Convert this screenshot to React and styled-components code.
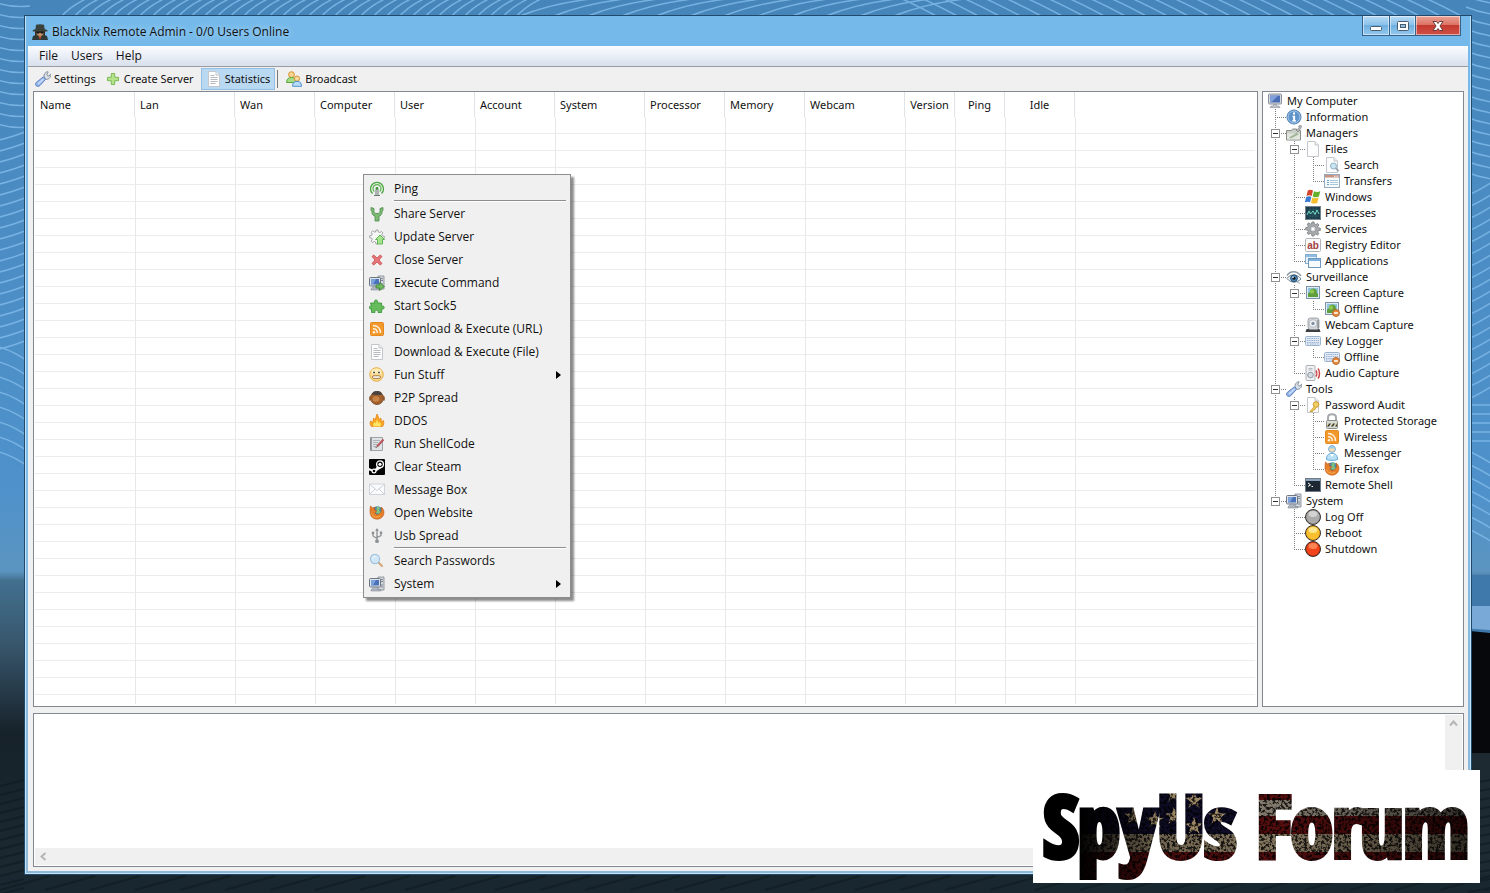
import React, { Fragment, useState } from 'react';

import styled, { createGlobalStyle, css } from 'styled-components';

const columns = [
  { name: 'Name', width: 100 },
  { name: 'Lan', width: 100 },
  { name: 'Wan', width: 80 },
  { name: 'Computer', width: 80 },
  { name: 'User', width: 80 },
  { name: 'Account', width: 80 },
  { name: 'System', width: 90 },
  { name: 'Processor', width: 80 },
  { name: 'Memory', width: 80 },
  { name: 'Webcam', width: 100 },
  { name: 'Version', width: 50, center: true },
  { name: 'Ping', width: 50, center: true },
  { name: 'Idle', width: 70, center: true },
];

const menuGroups = [
  [{ label: 'Ping', icon: 'antenna' }],
  [
    { label: 'Share Server', icon: 'fork' },
    { label: 'Update Server', icon: 'update' },
    { label: 'Close Server', icon: 'cross' },
    { label: 'Execute Command', icon: 'execute' },
    { label: 'Start Sock5', icon: 'puzzle' },
    { label: 'Download & Execute (URL)', icon: 'rss' },
    { label: 'Download & Execute (File)', icon: 'document' },
    { label: 'Fun Stuff', icon: 'smiley', more: true },
    { label: 'P2P Spread', icon: 'p2p' },
    { label: 'DDOS', icon: 'flame' },
    { label: 'Run ShellCode', icon: 'script' },
    { label: 'Clear Steam', icon: 'steam' },
    { label: 'Message Box', icon: 'mail' },
    { label: 'Open Website', icon: 'firefox' },
    { label: 'Usb Spread', icon: 'usb' },
  ],
  [
    { label: 'Search Passwords', icon: 'magnifier' },
    { label: 'System', icon: 'system', more: true },
  ],
];

const tree = {
  label: 'My Computer',
  icon: 'monitor',
  children: [
    { label: 'Information', icon: 'info' },
    {
      label: 'Managers',
      icon: 'managers',
      children: [
        {
          label: 'Files',
          icon: 'page',
          children: [
            { label: 'Search', icon: 'pageSearch' },
            { label: 'Transfers', icon: 'transfers' },
          ],
        },
        { label: 'Windows', icon: 'windows' },
        { label: 'Processes', icon: 'processes' },
        { label: 'Services', icon: 'gear' },
        { label: 'Registry Editor', icon: 'registry' },
        { label: 'Applications', icon: 'applications' },
      ],
    },
    {
      label: 'Surveillance',
      icon: 'eye',
      children: [
        {
          label: 'Screen Capture',
          icon: 'screen',
          children: [{ label: 'Offline', icon: 'screenOff' }],
        },
        { label: 'Webcam Capture', icon: 'webcam' },
        {
          label: 'Key Logger',
          icon: 'keyboard',
          children: [{ label: 'Offline', icon: 'keyboardOff' }],
        },
        { label: 'Audio Capture', icon: 'audio' },
      ],
    },
    {
      label: 'Tools',
      icon: 'wrench',
      children: [
        {
          label: 'Password Audit',
          icon: 'pageKey',
          children: [
            { label: 'Protected Storage', icon: 'lock' },
            { label: 'Wireless', icon: 'rss' },
            { label: 'Messenger', icon: 'messenger' },
            { label: 'Firefox', icon: 'firefox' },
          ],
        },
        { label: 'Remote Shell', icon: 'shell' },
      ],
    },
    {
      label: 'System',
      icon: 'system',
      children: [
        { label: 'Log Off', icon: 'ballGrey' },
        { label: 'Reboot', icon: 'ballYellow' },
        { label: 'Shutdown', icon: 'ballRed' },
      ],
    },
  ],
};

const gearPath =
  'M7 1h2l.4 2 1.3.6 1.8-1.1 1.3 1.4-1.1 1.7.6 1.3 2 .4v2l-2 .4-.6 1.3 1.1 1.8-1.4 1.3-1.7-1.1-1.3.6L9 15H7l-.4-2-1.3-.6-1.8 1.1-1.3-1.4 1.1-1.7-.6-1.3-2-.4v-2l2-.4.6-1.3-1.1-1.8 1.4-1.3 1.7 1.1L6.6 3z';

const ball = (light, mid, dark) => (
  <Fragment>
    <circle cx="8" cy="8" r="7.5" fill={dark} stroke="#3a3430" />
    <circle cx="8" cy="8" r="6.5" fill={mid} />
    <ellipse cx="8" cy="5" rx="4.5" ry="3" fill={light} opacity="0.8" />
  </Fragment>
);

const page = (
  <Fragment>
    <path d="M2.5.5H10l3.500 3.500v11.500h-11z" fill="#fdfdfd" stroke="#c3c6cb" />
    <path d="M10 .5V4h3.500" fill="#eceef0" stroke="#c3c6cb" />
  </Fragment>
);

const noEntry = (
  <Fragment>
    <circle cx="12" cy="12" r="3.5" fill="#e58a3c" stroke="#b45a1c" strokeWidth="0.8" />
    <path d="M10 12h4" stroke="#fff" strokeWidth="1.5" />
  </Fragment>
);

const screen = (
  <Fragment>
    <rect x="1.5" y="1.5" width="13" height="12" fill="#dfeaf3" stroke="#7d93a8" />
    <rect x="3" y="3" width="10" height="9" fill="#8fc3e0" />
    <path d="M3 12V8.500l2-1.500 1-3 3-.6 2.500 1.600.5 3 1 1v3z" fill="#5f9e3c" />
    <circle cx="7" cy="6.5" r="2.2" fill="#8cc653" />
  </Fragment>
);

const keyboard = (
  <Fragment>
    <rect x="0.5" y="3.5" width="15" height="9" rx="1" fill="#e3ecf6" stroke="#9db4cf" />
    <path
      d="M2 5.500h12M2 7.500h12M2 9.500h12M2 11h2M5 11h6M12 11h2"
      stroke="#9bb2d0"
      strokeDasharray="1.5 0.7"
    />
  </Fragment>
);

const system = (
  <Fragment>
    <path d="M9 1h6v13H9z" fill="#d5d9df" stroke="#7d858f" strokeWidth="0.8" />
    <path d="M10.500 3.500H14M10.500 5.500H14M13 8v4" stroke="#7f8791" />
    <rect x="0.5" y="2.5" width="11" height="8.5" rx="1" fill="#dfe3e8" stroke="#6d7784" />
    <rect x="2" y="4" width="8" height="5.5" fill="#4a72b8" />
    <path d="M2 4h5L4 9.500H2z" fill="#7da1da" />
    <path d="M4.500 11h3L9 13.500h3V15H2v-1z" fill="#aeb4bd" stroke="#7b838e" strokeWidth="0.5" />
  </Fragment>
);

const drawings = {
  spy: (
    <Fragment>
      <path d="M3 7h10v5H3z" fill="#3b2f28" />
      <path d="M4.500 6h7v4.500L9.500 13h-3l-2-2.500z" fill="#c08f62" />
      <path d="M4 .8l4-.6 4 .6.6 4.200 3 1.200-.4 1.300H1l-.4-1.300L3.500 5z" fill="#39413a" />
      <path d="M4.300 7.200h7.400v2.200H9L8 8.300 7 9.400H4.300z" fill="#15181a" />
      <path d="M0 16l1-4 4-1.500 3 3 3-3 4 1.500 1 4z" fill="#2e3a38" />
      <path d="M6.500 12.500h3L8 16z" fill="#b5462f" />
    </Fragment>
  ),
  wrench: (
    <Fragment>
      <path
        d="M9.500 7c-1.200-2.500 0-5.500 3-6.400l.7.3-1.300 2.400.8 1.500 1.600.1 1.200-2 .5.6C15.800 6.700 13 9 10.600 8.200z"
        fill="#d9dfe6"
        stroke="#7c8794"
        strokeWidth="0.9"
      />
      <path
        d="M8.400 5.800l2.300 2.400-5.600 6.200c-1.200 1.300-3 1.300-3.900.4-1-.9-.9-2.600.4-3.700z"
        fill="#91b4e8"
        stroke="#5f80bd"
        strokeWidth="0.9"
      />
      <path d="M8.500 8L3 13" stroke="#d3e3fb" strokeWidth="1.3" />
    </Fragment>
  ),
  plus: (
    <path
      d="M6.300 2.500h3.400v3.800h3.800v3.400H9.700v3.800H6.300V9.700H2.500V6.300h3.800z"
      fill="#b4e38c"
      stroke="#7cba55"
    />
  ),
  document: (
    <Fragment>
      {page}
      <path d="M4.500 4.500h4M4.500 6.500h7M4.500 8.500h7M4.500 10.500h7M4.500 12.500h5" stroke="#b6b9be" />
    </Fragment>
  ),
  users: (
    <Fragment>
      <circle cx="5.5" cy="3.6" r="2.9" fill="#f6d492" stroke="#d7922c" />
      <path d="M.6 11.500c0-3.500 1.800-5 4.900-5s4.900 1.500 4.900 5z" fill="#a6dc85" stroke="#5ca53c" />
      <circle cx="11" cy="7.6" r="2.6" fill="#f8d9a0" stroke="#d7922c" />
      <path d="M6.600 15.300c0-3.600 1.400-4.900 4.400-4.900s4.500 1.300 4.500 4.900z" fill="#b8dcf7" stroke="#4f94cf" />
    </Fragment>
  ),
  monitor: (
    <Fragment>
      <rect x="1.5" y="1" width="13" height="10" rx="1" fill="#d6d9de" stroke="#8b919b" />
      <rect x="3" y="2.5" width="10" height="7" fill="#4a6db6" />
      <path d="M3 2.500h8L4.500 9.500H3z" fill="#7f9fd8" />
      <path d="M6.500 11.500h3V13H12l1 1.500H3L4 13h2.500z" fill="#c3c8ce" stroke="#8b919b" strokeWidth="0.6" />
    </Fragment>
  ),
  info: (
    <Fragment>
      <circle cx="8" cy="8" r="7" fill="#5f95cb" stroke="#477cb4" />
      <circle cx="8" cy="8" r="6" fill="none" stroke="#b8d4ec" strokeWidth="0.8" />
      <path d="M7 3.500h2v2H7zM6.500 6.800h2.600v4.400h.9v1.300H6.200v-1.300h.9V8.100h-.6z" fill="#fff" />
    </Fragment>
  ),
  managers: (
    <Fragment>
      <path d="M.5 5.500h5l1-1.500h4v1.500h4V15H.5z" fill="#c9cec6" stroke="#888d86" />
      <path d="M1 8.500h13v6H1z" fill="#e2e6df" />
      <path d="M3 12.500l8-5 1.500 2-7.500 4z" fill="#a4b59a" />
      <path d="M10.500 5.500L13 2.800 12.700 1l2-1 .8 1.500-.8 2L12 7z" fill="#b7b9bd" stroke="#7f8287" strokeWidth="0.7" />
    </Fragment>
  ),
  page,
  pageSearch: (
    <Fragment>
      {page}
      <circle cx="9.5" cy="9" r="3" fill="#cbe6f2" stroke="#8fb2c8" />
      <path d="M11.600 11.200l3 3" stroke="#9da7b2" strokeWidth="1.8" />
    </Fragment>
  ),
  transfers: (
    <Fragment>
      <rect x="0.5" y="1.5" width="15" height="13" fill="#f8fbfd" stroke="#95abc0" />
      <path d="M1 2h14v2.500H1z" fill="#c9927f" />
      <path d="M10 3.200h4" stroke="#fff" strokeDasharray="1 0.5" />
      <path d="M3 7.500h2M3 9.500h2M3 11.500h2" stroke="#6ba3c6" />
      <path d="M6 7.500h8M6 9.500h8M6 11.500h8" stroke="#a9c8dc" />
    </Fragment>
  ),
  windows: (
    <Fragment>
      <path d="M2.800 1.500C4.500.3 6.500.4 8 1.600L6.700 7C5.300 6 3.200 6 1.500 6.900z" fill="#d6452b" />
      <path d="M9 2.200c2 1 4 1 6.300 0l-1.400 5.400c-2.200 1-4.200.9-6.200-.2z" fill="#67b02e" />
      <path d="M1.200 8c1.800-.9 3.700-1 5.200-.1L5 13.300c-1.500-.9-3.400-.8-5.200 0z" fill="#3d7bd2" />
      <path d="M7.400 8.400c2.100 1.100 4 1.100 6.200.2l-1.400 5.300c-2.100 1-4.200.9-6.200-.2z" fill="#f2bf2a" />
    </Fragment>
  ),
  processes: (
    <Fragment>
      <rect x="0.5" y="1.5" width="15" height="13" fill="#1f3b4a" stroke="#74838c" />
      <path d="M2 5h12M2 8h12M2 11h12M5 2v12M8 2v12M11 2v12" stroke="#2e6670" strokeWidth="0.6" />
      <path d="M2 10l2-4 1.500 3L8 6l2 3.500L12 5l2 4" fill="none" stroke="#6fdcc0" />
    </Fragment>
  ),
  gear: (
    <Fragment>
      <path d={gearPath} fill="#a9acae" stroke="#85888b" />
      <circle cx="8" cy="8" r="3" fill="#d4d6d8" stroke="#85888b" strokeWidth="0.7" />
      <circle cx="8" cy="8" r="1.2" fill="#fff" />
    </Fragment>
  ),
  registry: (
    <Fragment>
      <rect x="0.5" y="1.5" width="15" height="13" rx="1" fill="#fbfbfb" stroke="#b3b5b8" />
      <text x="8" y="12" textAnchor="middle" fontFamily="Liberation Sans, sans-serif" fontWeight="700" fontSize="10" fill="#a2403c">
        ab
      </text>
    </Fragment>
  ),
  applications: (
    <Fragment>
      <rect x="0.5" y="1.5" width="11" height="9" fill="#e8f2fb" stroke="#8aaed0" />
      <path d="M1 2h10v2H1z" fill="#8fbbe2" />
      <rect x="3.5" y="5.5" width="12" height="9" fill="#f6fafd" stroke="#6f97be" />
      <path d="M4 6h11v2H4z" fill="#7fb0dd" />
    </Fragment>
  ),
  eye: (
    <Fragment>
      <path d="M1 6.500C4 1.500 11 1 15 7" fill="none" stroke="#8f9ba6" strokeWidth="1.5" />
      <path d="M1 9.500C4 5 11 4.500 15 10c-4 4-10 4.500-14-.5z" fill="#edf3f7" stroke="#6c7f8e" />
      <circle cx="8" cy="9.3" r="3.4" fill="#4e86b4" stroke="#2b4f70" />
      <circle cx="8" cy="9.3" r="1.5" fill="#101820" />
      <circle cx="7" cy="8.2" r="0.8" fill="#fff" />
      <path d="M11 13l3 1.500" stroke="#a0abb5" />
    </Fragment>
  ),
  screen,
  screenOff: (
    <Fragment>
      {screen}
      {noEntry}
    </Fragment>
  ),
  webcam: (
    <Fragment>
      <path d="M1.500 12h13l1 3H.5z" fill="#3c3f42" />
      <rect x="3" y="1" width="11" height="11.5" rx="2.5" fill="#d4d8dc" stroke="#8d9297" strokeWidth="0.8" />
      <circle cx="8" cy="6.5" r="3.8" fill="#f2f4f6" stroke="#a5abb1" strokeWidth="0.7" />
      <circle cx="8" cy="6.5" r="1.7" fill="#7e90a2" />
      <path d="M13 3v8" stroke="#6f757b" />
    </Fragment>
  ),
  keyboard,
  keyboardOff: (
    <Fragment>
      {keyboard}
      {noEntry}
    </Fragment>
  ),
  audio: (
    <Fragment>
      <rect x="1" y="0.5" width="9" height="15" rx="1" fill="#f0f1f3" stroke="#aeb1b6" />
      <circle cx="5.5" cy="10" r="2.8" fill="#d4dae2" stroke="#9098a3" />
      <path d="M3.500 3.500h4M3.500 5h4" stroke="#b7bbc1" />
      <path d="M11 5.500c1 1.500 1 4.500 0 6M13 3.500c2 2.500 2 7.500 0 10" fill="none" stroke="#cf4449" strokeWidth="1.5" />
    </Fragment>
  ),
  pageKey: (
    <Fragment>
      {page}
      <circle cx="11" cy="7.5" r="2.8" fill="#f3cf62" stroke="#c99a30" />
      <path d="M9.500 9.500l-4.500 5h2.500L8 13h1.500l2-3" fill="#f3cf62" stroke="#c99a30" strokeWidth="0.9" />
    </Fragment>
  ),
  lock: (
    <Fragment>
      <path d="M4 8V4.500c0-4.500 8-4.500 8 0V8" fill="none" stroke="#a6a9ad" strokeWidth="2" />
      <rect x="2.5" y="7.5" width="11" height="8" rx="1" fill="#d9dcd2" stroke="#8a8d86" />
      <path d="M3 13.500l2-3h2l-2 3zM7 13.500l2-3h2l-2 3zM11 13.500l2-3v3z" fill="#333" />
      <path d="M3 13l2-2.500M7 13l2-2.500M11 13l2-2.500" stroke="#d4b93a" strokeWidth="0.6" />
    </Fragment>
  ),
  rss: (
    <Fragment>
      <rect x="1.5" y="1.5" width="13" height="13" rx="1" fill="#f2982c" stroke="#e5891c" />
      <path d="M4 4.500c4.500 0 7.500 3 7.500 7.500M4 7.800c2.700 0 4.300 1.700 4.300 4.200" fill="none" stroke="#fff3df" strokeWidth="1.5" />
      <circle cx="5" cy="11.2" r="1.2" fill="#fff3df" />
    </Fragment>
  ),
  messenger: (
    <Fragment>
      <circle cx="8" cy="4" r="3.4" fill="#f5dcb5" stroke="#6ba9d4" />
      <path d="M4.500 3.500C5 0 11 0 11.500 3.500 9.500 2.500 7 4 4.500 3.500z" fill="#9acbea" />
      <path d="M2.500 14.500c0-4.500 2-6 5.500-6s5.500 1.500 5.500 6c-3 1.200-8 1.200-11 0z" fill="#b9e0f5" stroke="#67a8d3" />
      <path d="M6 9l2 3 2-3z" fill="#fff" />
    </Fragment>
  ),
  firefox: (
    <Fragment>
      <circle cx="8.5" cy="7" r="5.8" fill="#4f87a8" />
      <path d="M8 1.500l3 1-1 3 2 1.500-2 2-3-1z" fill="#7ec27f" />
      <path
        d="M1.500 1l2 1.800 2.500-.5-1 2.500 3 1-2 1.800c.5 2.300 3.200 2.300 4.700 1C12.500 7.400 13 4.500 12 2c3.500 2 4 7.300 1 10.200s-8 2.400-10.500-.5C.6 9.300.8 4.500 1.500 1z"
        fill="#e6802a"
        stroke="#b9521a"
        strokeWidth="0.6"
      />
      <path d="M2.500 8.500c1 3.300 4.800 4.700 8.500 2.800" fill="none" stroke="#f6b04a" />
    </Fragment>
  ),
  shell: (
    <Fragment>
      <rect x="0.5" y="1.5" width="15" height="13" fill="#1e2833" stroke="#6e7b88" />
      <path d="M1 2h14v2H1z" fill="#8ba2b9" />
      <path d="M3 6l2.500 1.800L3 9.500M6.500 9.500H8" fill="none" stroke="#fff" />
    </Fragment>
  ),
  system,
  ballGrey: ball('#dcdcdc', '#ababab', '#8c8c8c'),
  ballYellow: ball('#fff0a4', '#f8c02e', '#e09a10'),
  ballRed: ball('#ff9460', '#f1441a', '#c42a0c'),
  antenna: (
    <Fragment>
      <path d="M3.500 12.500a6.500 6.500 0 1 1 9 0" fill="none" stroke="#48a63c" strokeWidth="1.3" />
      <path d="M5.300 10.500a4 4 0 1 1 5.400 0" fill="none" stroke="#5fb653" strokeWidth="1.3" />
      <circle cx="8" cy="7.5" r="1.4" fill="#3b8f33" />
      <path d="M7 8.500v6M9 8.500v6M5 14.500h6" stroke="#6b7a70" />
    </Fragment>
  ),
  fork: (
    <path
      d="M2 1.500l3 1v3c0 1.300 1 2 3 2s3-.7 3-2v-3l3-1v2.800l-.8 1.200C13 8.500 11.800 9.800 10 10.200V15H6v-4.800C4.200 9.800 3 8.500 2.800 5.500L2 4.300z"
      fill="#7cba76"
      stroke="#4b8a4c"
      strokeWidth="0.8"
    />
  ),
  update: (
    <Fragment>
      <path d={gearPath} fill="#f7f7f7" stroke="#999c9f" strokeWidth="0.9" />
      <path d="M11 6l4.500 4.500h-2V15h-5v-4.500h-2z" fill="#a4e48f" stroke="#4da83f" strokeWidth="0.8" />
    </Fragment>
  ),
  cross: (
    <path
      d="M3 4.500L4.800 3 8 6l3.200-3L13 4.500 10 8l3 3.500-1.800 1.500L8 10l-3.200 3L3 11.500 6 8z"
      fill="#e8777c"
      stroke="#c5474e"
      strokeWidth="0.8"
    />
  ),
  execute: (
    <Fragment>
      {system}
      <path d="M7 10h3.500V7.500l5 4-5 4V13H7z" fill="#6fb95c" stroke="#3c8433" strokeWidth="0.8" />
    </Fragment>
  ),
  puzzle: (
    <path
      d="M1.500 5h4.200C4 1 9.800 1 8.600 5h4v3.200c3.500-1.200 3.500 3.800 0 2.800v3.500H9c.8-3-3.800-3-3 0H2.500V11c-3 .8-3-3.800 0-2.800L1.500 5z"
      fill="#66bb5c"
      stroke="#3f9a3f"
      strokeWidth="0.9"
    />
  ),
  smiley: (
    <Fragment>
      <circle cx="7.5" cy="7.5" r="6.8" fill="#fbd98a" stroke="#dfa02d" strokeWidth="0.8" />
      <ellipse cx="7.5" cy="4" rx="5" ry="2.5" fill="#fff0bd" opacity="0.8" />
      <circle cx="4.7" cy="5.5" r="1.6" fill="#fff" />
      <circle cx="10.3" cy="5.5" r="1.6" fill="#fff" />
      <circle cx="5" cy="5.5" r="0.9" fill="#3c2b10" />
      <circle cx="10" cy="5.5" r="0.9" fill="#3c2b10" />
      <rect x="3.5" y="8.8" width="8" height="2.6" rx="1.3" fill="#fff" stroke="#8c5a20" strokeWidth="0.8" />
    </Fragment>
  ),
  p2p: (
    <Fragment>
      <circle cx="8" cy="8" r="6.5" fill="#a2602c" stroke="#6d3b17" strokeWidth="0.8" />
      <ellipse cx="7" cy="9" rx="3.5" ry="2.8" fill="#c98347" />
      <path d="M3 3.500C4.500.2 11.500.2 13 3.500L12 5H4z" fill="#4b443f" />
      <path d="M1 6.500v4M15 6.500v4" stroke="#8a5126" strokeWidth="1.5" />
    </Fragment>
  ),
  flame: (
    <Fragment>
      <path
        d="M2.500 13.500c-2-2-1.500-4-.8-5.500L4 9.500 4.500 5l1.800 1.800L8 1l2.300 5.500L12 5l.3 4 2.200-1.500c.6 2 .4 4.300-1 6z"
        fill="#f7a823"
        stroke="#e88415"
        strokeWidth="0.8"
      />
      <path d="M4.500 13.500c-1-2 .3-3.500 1.200-4.500l1 1.500L8 6.500l1.600 4L10.800 9c1.200 1.500 1.300 3 .6 4.500z" fill="#ffe563" />
    </Fragment>
  ),
  script: (
    <Fragment>
      <path d="M1.500 1.500h12v13h-12z" fill="#dfe2e4" stroke="#a1a5a9" />
      <path d="M4 4.500h7M4 6.500h5M4 8.500h4M4 10.500h3" stroke="#aeb3b8" />
      <path d="M2 1.500v13" stroke="#80858a" strokeWidth="1.5" />
      <path d="M14.500 3.500L8 10.500" stroke="#b7545b" strokeWidth="2" />
      <path d="M8 10.500l-1.300 1.500" stroke="#444" />
    </Fragment>
  ),
  steam: (
    <Fragment>
      <rect width="16" height="16" rx="1" fill="#050505" />
      <path d="M0 9l5 2.200L8.500 7 13 8.500l-6 4L5.500 14 2 12l-2-.5z" fill="#fff" />
      <circle cx="11" cy="5.3" r="3.4" fill="#050505" stroke="#fff" strokeWidth="1.3" />
      <circle cx="11" cy="5.3" r="1.6" fill="#fff" />
      <circle cx="5" cy="12" r="2.5" fill="#fff" />
      <circle cx="5" cy="12" r="1.3" fill="#050505" />
    </Fragment>
  ),
  mail: (
    <Fragment>
      <rect x="0.5" y="2" width="15" height="10.5" fill="#fafbfc" stroke="#cfd3da" />
      <path d="M1 2.500l7 6 7-6M1 12l5-5M15 12l-5-5" fill="none" stroke="#bfc5d0" strokeWidth="0.8" />
    </Fragment>
  ),
  usb: (
    <Fragment>
      <path d="M8 2v11M8 10.500L4 8V5.500M8 9.500l4-2V5" fill="none" stroke="#8e9194" strokeWidth="1.3" />
      <path d="M8 0l1.800 3H6.200z" fill="#8e9194" />
      <circle cx="8" cy="13.2" r="1.9" fill="#8e9194" />
      <circle cx="4" cy="5" r="1.4" fill="#8e9194" />
      <path d="M10.800 3.500h2.400v2.400h-2.400z" fill="#8e9194" />
    </Fragment>
  ),
  magnifier: (
    <Fragment>
      <circle cx="6" cy="6" r="4.6" fill="#cfe8f8" stroke="#a3c3dd" strokeWidth="1.2" />
      <path d="M3.500 5.500C4 4 5 3.500 6.500 3.500" fill="none" stroke="#fff" />
      <path d="M9.500 9.500l1.200 1.200" stroke="#8fa0b0" strokeWidth="1.5" />
      <path d="M10.500 10.500l2.500 2.500" stroke="#d3a878" strokeWidth="2.2" strokeLinecap="round" />
    </Fragment>
  ),
};

const Icon = ({ name }) => (
  <IconBox viewBox="0 0 16 16" aria-hidden="true">
    {drawings[name]}
  </IconBox>
);

const range = (from, to, step) => {
  const out = [];
  for (let i = from; i < to; i += step) out.push(i);
  return out;
};

const Wallpaper = () => (
  <Backdrop viewBox="0 0 1490 893" preserveAspectRatio="none" aria-hidden="true">
    <defs>
      <linearGradient id="sky" x1="0" y1="0" x2="0" y2="1">
        <stop offset="0" stopColor="#4585b9" />
        <stop offset="0.2" stopColor="#4a8bc2" />
        <stop offset="0.55" stopColor="#4f92cb" />
        <stop offset="0.64" stopColor="#5b94c0" />
        <stop offset="0.65" stopColor="#42708f" />
        <stop offset="0.72" stopColor="#38576d" />
        <stop offset="0.82" stopColor="#17222a" />
        <stop offset="1" stopColor="#1b2a32" />
      </linearGradient>
    </defs>
    <rect width="1490" height="893" fill="url(#sky)" />
    <g fill="none" stroke="#7fb9e8" strokeWidth="1.5" opacity="0.85">
      {range(2, 130, 11).map(y => (
        <path key={y} d={`M-5 ${y}q15 6 35 4`} />
      ))}
      {range(136, 350, 11).map(y => (
        <path key={y} d={`M-5 ${y + 5}q15 -3 35 -11`} />
      ))}
      {range(346, 460, 15).map(y => (
        <path key={y} d={`M-5 ${y}q18 4 35 17`} />
      ))}
      {range(60, 520, 13).map(x => (
        <path key={x} d={`M${x} 18q10 -12 28 -20`} />
      ))}
      {range(520, 900, 34).map(x => (
        <path key={x} d={`M${x} 16q30 -12 70 -17`} />
      ))}
      {range(900, 1440, 21).map(x => (
        <path key={x} d={`M${x} -2q18 8 40 20`} />
      ))}
      {range(-4, 180, 11).map(y => (
        <path key={y} d={`M1466 ${y}q12 5 26 7`} />
      ))}
      {range(190, 400, 12).map(y => (
        <path key={y} d={`M1466 ${y + 6}q12 -5 26 -14`} />
      ))}
      {range(405, 445, 9).map(y => (
        <path key={y} d={`M1466 ${y}h26`} />
      ))}
      {range(450, 540, 13).map(y => (
        <path key={y} d={`M1466 ${y}q12 5 26 14`} />
      ))}
    </g>
    <path d="M1460 575h30v60h-30z" fill="#3f78aa" />
    <path d="M1460 606h30v24l-30 -2z" fill="#79a9d6" />
    <path d="M1460 630l30 3v122h-30z" fill="#07080c" />
    <path d="M1460 753h30v140h-30z" fill="#1d2a31" />
    <path d="M0 874h1490v19H0z" fill="#192830" />
    <g stroke="#101a20" strokeWidth="2" opacity="0.6">
      {range(780, 893, 9).map(y => (
        <path key={y} d={`M0 ${y + 6}l24 -6M1468 ${y + 4}l22 -4`} />
      ))}
      {range(0, 1490, 45).map(x => (
        <path key={x} d={`M${x} 890l50 -14`} />
      ))}
    </g>
  </Backdrop>
);

const star = 'M0-9l2.300 6.200 6.500.2-5.200 4L5.500 7.700 0 4l-5.500 3.700 1.900-6.300-5.200-4 6.500-.2z';

const stars = [
  [141, 24],
  [161, 30],
  [141, 46],
  [122, 50],
  [161, 56],
  [184, 46],
  [100, 46],
];

const Logo = () => (
  <LogoCard viewBox="0 0 447 113" role="img" aria-label="SpyUs Forum">
    <defs>
      <filter id="grunge" x="0" y="0" width="100%" height="100%">
        <feTurbulence type="fractalNoise" baseFrequency="0.35" numOctaves="3" seed="4" />
        <feColorMatrix values="0 0 0 0 0  0 0 0 0 0  0 0 0 0 0  0 0 0 6 -2.7" />
      </filter>
      <linearGradient id="shade" x1="0" y1="0" x2="1" y2="0">
        <stop offset="0" stopColor="#000" />
        <stop offset="0.1" stopColor="#000" />
        <stop offset="0.28" stopColor="#000" stopOpacity="0.25" />
        <stop offset="0.55" stopColor="#000" stopOpacity="0.1" />
        <stop offset="1" stopColor="#000" stopOpacity="0.7" />
      </linearGradient>
      <pattern id="flag" width="447" height="113" patternUnits="userSpaceOnUse">
        <rect width="447" height="113" fill="#5d0f10" />
        <rect y="30" width="447" height="16" fill="#93897a" />
        <rect y="64" width="447" height="18" fill="#93846a" />
        <rect width="216" height="64" fill="#120f30" />
        {stars.map(([x, y]) => (
          <path key={`${x}-${y}`} d={star} fill="#c5ab80" transform={`translate(${x} ${y})`} />
        ))}
        <rect width="447" height="113" filter="url(#grunge)" opacity="0.8" />
        <rect width="447" height="113" fill="url(#shade)" />
      </pattern>
    </defs>
    <LogoText x="223" y="87" textAnchor="middle">
      SpyUs Forum
    </LogoText>
  </LogoCard>
);

const TreeNode = ({ node, guides, last }) => {
  const [open, setOpen] = useState(true);

  const toggleHandle = () => {
    setOpen(!open);
  };

  const nested = guides.length > 0;
  // the last slot belongs to this node, the ones before it to its parents
  const parents = guides.slice(0, -1);

  return (
    <li>
      <TreeRow>
        {parents.map((line, i) => (
          <Guide key={i} $line={line} />
        ))}
        {nested && (
          <Guide $line $half={last} $branch>
            {node.children && (
              <Toggle
                type="button"
                aria-label={`Toggle ${node.label}`}
                aria-expanded={open}
                onClick={toggleHandle}
              >
                <svg viewBox="0 0 7 7" width="7" height="7">
                  <path d={open ? 'M1 3.500h5' : 'M1 3.500h5M3.500 1v5'} stroke="#333" />
                </svg>
              </Toggle>
            )}
          </Guide>
        )}
        <Icon name={node.icon} />
        <span>{node.label}</span>
      </TreeRow>
      {node.children && open && (
        <TreeList>
          {node.children.map((child, i) => {
            const isLast = i === node.children.length - 1;
            return (
              <TreeNode
                key={child.label}
                node={child}
                last={isLast}
                guides={[...guides, !isLast]}
              />
            );
          })}
        </TreeList>
      )}
    </li>
  );
};

const App = () => {
  const [statistics, setStatistics] = useState(true);

  return (
    <Desktop>
      <GlobalStyle />
      <Wallpaper />
      <Window>
        <TitleBar>
          <Icon name="spy" />
          <Title>BlackNix Remote Admin - 0/0 Users Online</Title>
          <Controls>
            <Control type="button" aria-label="Minimize">
              <svg width="14" height="12" viewBox="0 0 14 12">
                <rect x="1.5" y="6.5" width="11" height="4" rx="1" fill="#fff" stroke="#4b5d6c" />
              </svg>
            </Control>
            <Control type="button" aria-label="Maximize">
              <svg width="14" height="12" viewBox="0 0 14 12">
                <rect x="1.5" y="1.5" width="11" height="9" rx="1" fill="#fff" stroke="#4b5d6c" />
                <rect x="4.5" y="4.5" width="5" height="3" fill="#8fc0e6" stroke="#4b5d6c" />
              </svg>
            </Control>
            <Control type="button" aria-label="Close" $close>
              <svg width="14" height="12" viewBox="0 0 14 12">
                <path
                  d="M2 1.500h3.500L7 3.500l1.500-2H12L9 6l3 4.500H8.500L7 8.500l-1.500 2H2L5 6z"
                  fill="#fff"
                  stroke="#6b3a3a"
                />
              </svg>
            </Control>
          </Controls>
        </TitleBar>

        <Client>
          <MenuBar>
            <MenuButton type="button">File</MenuButton>
            <MenuButton type="button">Users</MenuButton>
            <MenuButton type="button">Help</MenuButton>
          </MenuBar>

          <Toolbar>
            <ToolButton type="button">
              <Icon name="wrench" />
              Settings
            </ToolButton>
            <ToolButton type="button">
              <Icon name="plus" />
              Create Server
            </ToolButton>
            <ToolButton
              type="button"
              className={statistics ? 'active' : ''}
              aria-pressed={statistics}
              onClick={() => setStatistics(!statistics)}
            >
              <Icon name="document" />
              Statistics
            </ToolButton>
            <Divider />
            <ToolButton type="button">
              <Icon name="users" />
              Broadcast
            </ToolButton>
          </Toolbar>

          <Main>
            <ListPane>
              <ListClip>
                <UserTable>
                  <colgroup>
                    {columns.map(col => (
                      <col key={col.name} width={col.width} />
                    ))}
                    <col />
                  </colgroup>
                  <thead>
                    <tr>
                      {columns.map(col => (
                        <HeadCell key={col.name} $center={col.center}>
                          {col.name}
                        </HeadCell>
                      ))}
                      <td />
                    </tr>
                  </thead>
                  <tbody>
                    {range(0, 60, 1).map(row => (
                      <tr key={row}>
                        {columns.map(col => (
                          <BodyCell key={col.name} />
                        ))}
                        <BodyCell />
                      </tr>
                    ))}
                  </tbody>
                </UserTable>
              </ListClip>

              <ContextMenu>
                {menuGroups.map((group, i) => (
                  <Fragment key={i}>
                    {i > 0 && <MenuLine />}
                    {group.map(item => (
                      <MenuItem type="button" key={item.label}>
                        <Icon name={item.icon} />
                        <span>{item.label}</span>
                        {item.more && (
                          <svg width="5" height="8" viewBox="0 0 5 8">
                            <path d="M0 0l5 4-5 4z" />
                          </svg>
                        )}
                      </MenuItem>
                    ))}
                  </Fragment>
                ))}
              </ContextMenu>
            </ListPane>

            <TreePane>
              <TreeList>
                <TreeNode node={tree} guides={[]} />
              </TreeList>
            </TreePane>
          </Main>

          <LogPane>
            <Log aria-label="Log" readOnly />
            <ScrollBar $vertical>
              <ScrollButton type="button" aria-label="Scroll up">
                <svg width="9" height="7" viewBox="0 0 9 7">
                  <path d="M1 5.500l3.500-4 3.500 4" />
                </svg>
              </ScrollButton>
            </ScrollBar>
            <ScrollBar>
              <ScrollButton type="button" aria-label="Scroll left">
                <svg width="7" height="9" viewBox="0 0 7 9">
                  <path d="M5.500 1l-4 3.500 4 3.500" />
                </svg>
              </ScrollButton>
            </ScrollBar>
            <ScrollBar />
          </LogPane>
        </Client>
      </Window>
      <Logo />
    </Desktop>
  );
};

const GlobalStyle = createGlobalStyle`
  * {
    box-sizing: border-box;
  }
  body {
    margin: 0;
    font-family: "Noto Sans", "Open Sans", sans-serif;
    font-size: 11px;
    line-height: 16px;
    color: #111;
  }
  button {
    font: inherit;
    color: inherit;
    background: none;
    border: none;
    padding: 0;
  }
`;

const Desktop = styled.div`
  position: relative;
  display: flex;
  min-height: 100vh;
  padding: 15px 18px 18px 24px;
`;

const Backdrop = styled.svg`
  position: absolute;
  inset: 0;
  width: 100%;
  height: 100%;
`;

const IconBox = styled.svg`
  flex: none;
  width: 16px;
  height: 16px;
`;

const Window = styled.div`
  position: relative;
  flex: 1;
  min-width: 0;
  display: flex;
  flex-direction: column;
  padding: 0 3px 3px;
  border: 1px solid #1f4a6b;
  background: linear-gradient(to bottom, #74b9ea, #7dbcea 50%, #8fb8d6);
  box-shadow: inset 1px 0 #c4e2f7, inset -1px -1px #c4e2f7;
`;

const TitleBar = styled.div`
  display: flex;
  align-items: center;
  gap: 4px;
  height: 30px;
  padding: 2px 7px 0 4px;
`;

const Title = styled.div`
  flex: 1;
  font-family: 'Open Sans', sans-serif;
  font-size: 12px;
  text-shadow: 0 0 6px #c6e4fa;
`;

const Controls = styled.div`
  display: flex;
  align-self: flex-start;
  margin-top: -2px;
  border: 1px solid #36628a;
  border-top: none;
`;

const Control = styled.button`
  display: flex;
  align-items: center;
  justify-content: center;
  width: 26px;
  height: 19px;
  background: linear-gradient(to bottom, #b9dcf6, #86bfe9 50%, #6fb0e0 50%, #93c8ee);
  box-shadow: inset 0 0 0 1px rgba(255, 255, 255, 0.5);

  & + & {
    border-left: 1px solid #36628a;
  }

  ${props =>
    props.$close &&
    css`
      width: 45px;
      background: linear-gradient(to bottom, #eaa396, #dc7465 45%, #c53a30 50%, #cf5046);
    `}
`;

const Client = styled.div`
  flex: 1;
  min-height: 0;
  display: flex;
  flex-direction: column;
  padding: 0 4px 4px 5px;
  background: #f0f0f0;
`;

const MenuBar = styled.div`
  display: flex;
  gap: 13px;
  height: 21px;
  margin: 0 -4px 0 -5px;
  padding: 0 11px;
  background: linear-gradient(to bottom, #fbfcfe, #e9eef7 50%, #d9dfec);
  border-bottom: 1px solid #9a9ca0;
`;

const MenuButton = styled.button`
  font-family: 'Open Sans', sans-serif;
  font-size: 12px;
`;

const Toolbar = styled.div`
  display: flex;
  align-items: center;
  gap: 2px;
  height: 24px;
`;

const ToolButton = styled.button`
  display: flex;
  align-items: center;
  gap: 3px;
  height: 22px;
  padding: 0 5px 0 2px;

  &.active {
    padding: 0 4px;
    background: #b9d8f1;
    border: 1px solid #93bfe4;
  }
`;

const Divider = styled.div`
  width: 1px;
  height: 18px;
  margin-right: 4px;
  background: #777;
`;

const Main = styled.div`
  flex: 1;
  min-height: 0;
  display: flex;
  gap: 4px;
  margin-bottom: 6px;
`;

const pane = css`
  background: #fff;
  border: 1px solid #828790;
`;

const ListPane = styled.div`
  ${pane}
  position: relative;
  flex: 1;
  min-width: 0;
  padding: 0 2px 2px 1px;
  display: flex;
`;

const ListClip = styled.div`
  flex: 1;
  min-width: 0;
  height: 0;
  min-height: 100%;
  overflow: hidden;
`;

const UserTable = styled.table`
  width: 100%;
  table-layout: fixed;
  border-collapse: separate;
  border-spacing: 0;
`;

const HeadCell = styled.th`
  height: 25px;
  padding: 0 0 0 5px;
  font-weight: 400;
  text-align: left;
  white-space: nowrap;
  border-right: 1px solid #dfe3e8;

  ${props =>
    props.$center &&
    css`
      padding: 0;
      text-align: center;
    `}
`;

const BodyCell = styled.td`
  height: 17px;
  padding: 0;
  border-bottom: 1px solid #ececec;

  & + & {
    border-left: 1px solid #e8e8e8;
  }
`;

const ContextMenu = styled.div`
  position: absolute;
  left: 329px;
  top: 82px;
  width: 208px;
  padding: 2px;
  background: #f0f0f0;
  border: 1px solid #8d8d8d;
  box-shadow: 3px 3px 2px rgba(0, 0, 0, 0.45);
`;

const MenuItem = styled.button`
  display: flex;
  align-items: center;
  width: 100%;
  height: 23px;
  padding: 0 7px 0 3px;
  font-family: 'Open Sans', sans-serif;
  font-size: 12px;
  text-align: left;

  span {
    flex: 1;
    margin-left: 9px;
  }
`;

const MenuLine = styled.div`
  height: 2px;
  margin: 0 2px 0 28px;
  border-top: 1px solid #8d8d8d;
  background: #fff;
`;

const TreePane = styled.div`
  ${pane}
  width: 202px;
  padding: 1px 4px;
  overflow: hidden;
`;

const TreeList = styled.ul`
  margin: 0;
  padding: 0;
  list-style: none;
`;

const TreeRow = styled.div`
  display: flex;
  height: 16px;
  white-space: nowrap;

  > span {
    margin-left: 4px;
  }
`;

const dotsDown = 'repeating-linear-gradient(to bottom, #808080 0 1px, transparent 1px 2px)';
const dotsAcross = 'repeating-linear-gradient(to right, #808080 0 1px, transparent 1px 2px)';

const Guide = styled.div`
  flex: none;
  width: 19px;
  padding: 4px;
  background-repeat: no-repeat;
  background-image: ${props => (props.$line ? dotsDown : 'none')},
    ${props => (props.$branch ? dotsAcross : 'none')};
  background-position: 8px 0, 8px 8px;
  background-size: 1px ${props => (props.$half ? '8px' : '100%')}, 11px 1px;
`;

const Toggle = styled.button`
  display: flex;
  width: 9px;
  height: 9px;
  background: #fff;
  border: 1px solid #919191;
`;

const LogPane = styled.div`
  ${pane}
  display: grid;
  grid-template-columns: 1fr 17px;
  grid-template-rows: 1fr 17px;
  height: 154px;
  padding: 1px;
`;

const Log = styled.textarea`
  width: 100%;
  height: 100%;
  border: none;
  outline: none;
  resize: none;
  background: #fff;
`;

const ScrollBar = styled.div`
  display: flex;
  flex-direction: ${props => (props.$vertical ? 'column' : 'row')};
  background: #f0f0f0;
`;

const ScrollButton = styled.button`
  display: flex;
  align-items: center;
  justify-content: center;
  width: 17px;
  height: 17px;

  path {
    fill: none;
    stroke: #b5b5b5;
    stroke-width: 2px;
  }
`;

const LogoCard = styled.svg`
  position: absolute;
  right: 10px;
  bottom: 10px;
  width: 447px;
  height: 113px;
  background: #fff;
`;

const LogoText = styled.text`
  font-family: Impact, 'Open Sans Condensed', 'Roboto Condensed', 'Liberation Sans Narrow', sans-serif;
  font-size: 84px;
  font-weight: 700;
  fill: url(#flag);
  stroke: url(#flag);
  stroke-width: 6px;
`;

export default App;
